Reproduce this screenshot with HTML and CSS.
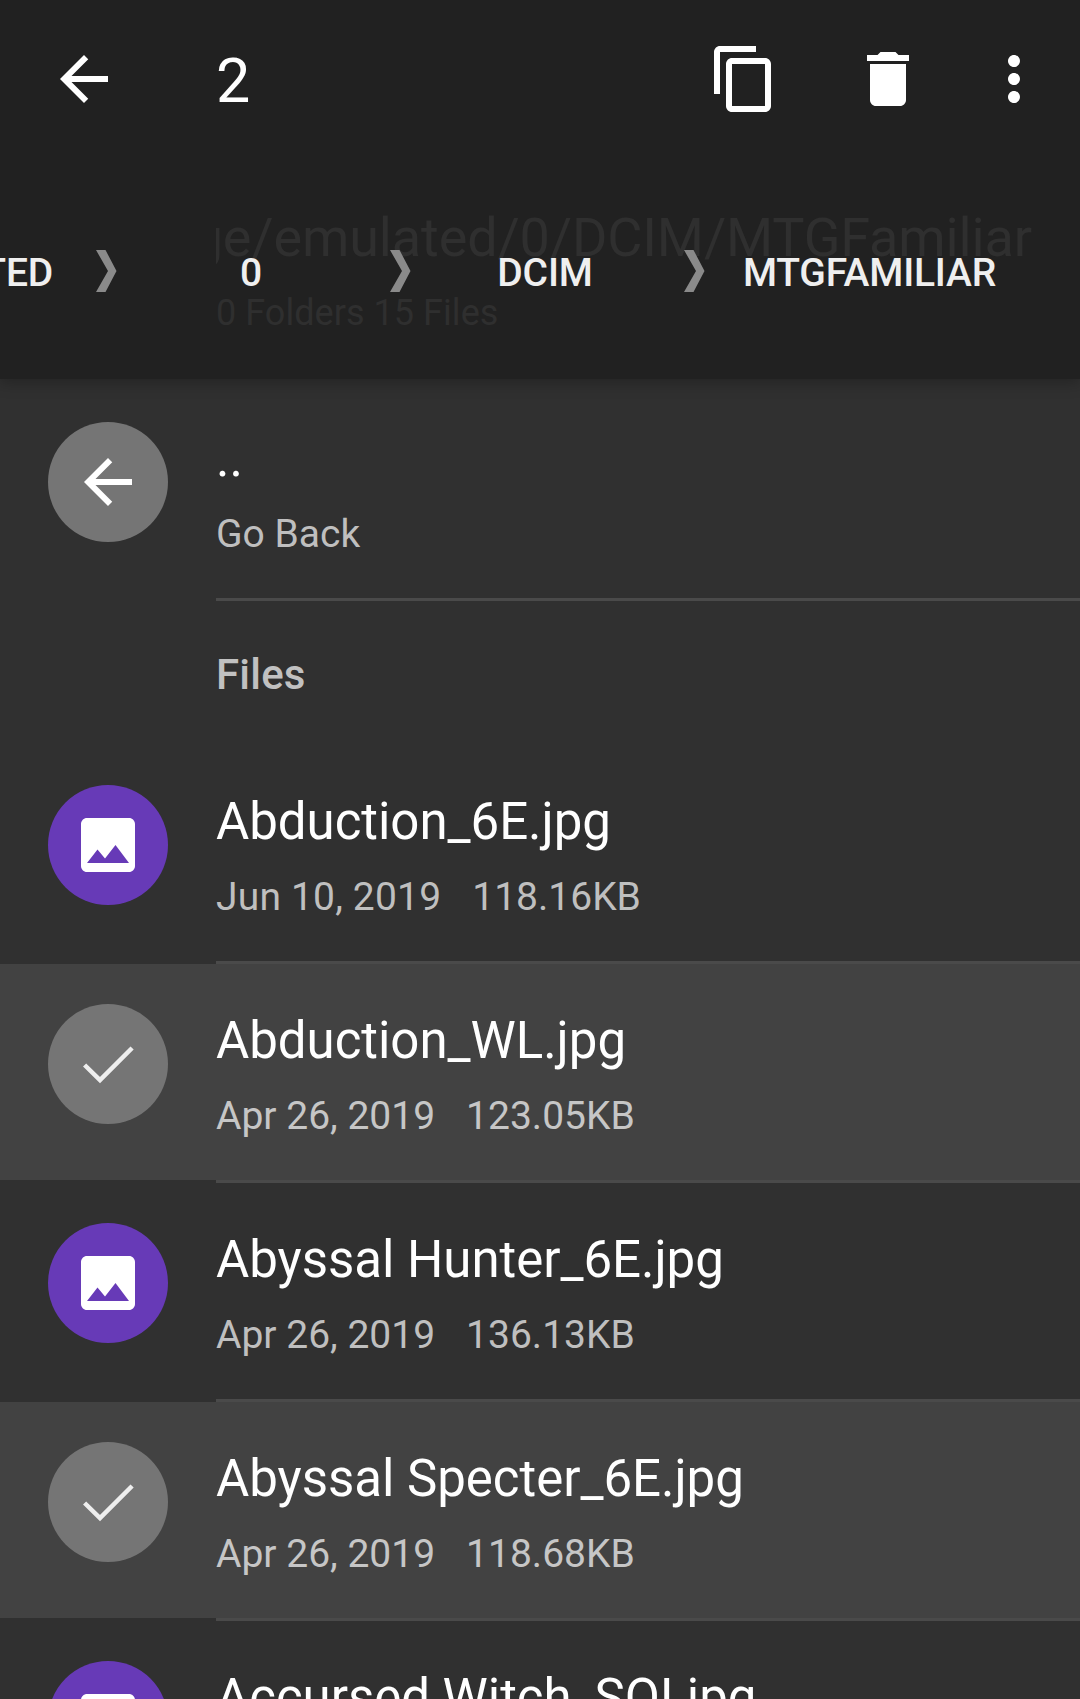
FILE: index.html
```html
<!DOCTYPE html>
<html lang="en">
<head>
<meta charset="utf-8">
<title>Files</title>
<link rel="stylesheet" href="styles.css">
</head>
<body>
<svg class="defs" aria-hidden="true">
  <symbol id="arrow" viewBox="0 0 24 24"><path d="M20 11H7.83l5.59-5.59L12 4l-8 8 8 8 1.41-1.41L7.83 13H20v-2z"/></symbol>
  <symbol id="image" viewBox="0 0 24 24"><path d="M21 19V5c0-1.100-.9-2-2-2H5c-1.100 0-2 .9-2 2v14c0 1.100.9 2 2 2h14c1.100 0 2-.9 2-2zM8.500 13.500l2.500 3.010L14.500 12l4.500 6H5l3.500-4.500z"/></symbol>
  <symbol id="check" viewBox="0 0 54 54"><path d="M3.600 28L19 43.200 51.100 11" fill="none" stroke="currentColor" stroke-width="4.500"/></symbol>
  <symbol id="chevron" viewBox="0 0 21 42"><path d="M0 0H9.500L20.500 21 9.500 42H0L12 21z"/></symbol>
</svg>
<header class="appbar">
  <div class="toolbar">
    <svg class="icon back"><use href="#arrow"/></svg>
    <h1 class="count">2</h1>
    <svg class="icon copy" viewBox="0 0 24 24"><path d="M16 1H4c-1.100 0-2 .9-2 2v14h2V3h12V1zm3 4H8c-1.100 0-2 .9-2 2v14c0 1.100.9 2 2 2h11c1.100 0 2-.9 2-2V7c0-1.100-.9-2-2-2zm0 16H8V7h11v14z"/></svg>
    <svg class="icon trash" viewBox="0 0 24 24"><path d="M6 19c0 1.100.9 2 2 2h8c1.100 0 2-.9 2-2V7H6v12zM19 4h-3.500l-1-1h-5l-1 1H5v2h14V4z"/></svg>
    <svg class="icon more" viewBox="0 0 24 24"><path d="M12 8c1.100 0 2-.9 2-2s-.9-2-2-2-2 .9-2 2 .9 2 2 2zm0 2c-1.100 0-2 .9-2 2s.9 2 2 2 2-.9 2-2-.9-2-2-2zm0 6c-1.100 0-2 .9-2 2s.9 2 2 2 2-.9 2-2-.9-2-2-2z"/></svg>
  </div>
  <div class="ghost"><div class="ghost-path"><span>/storage/emulated/0/DCIM/MTGFamiliar</span></div><div class="ghost-info">0 Folders 15 Files</div></div>
  <nav class="crumbs">
    <span class="crumb first">EMULATED</span><svg class="sep"><use href="#chevron"/></svg>
    <span class="crumb">0</span><svg class="sep"><use href="#chevron"/></svg>
    <span class="crumb">DCIM</span><svg class="sep"><use href="#chevron"/></svg>
    <span class="crumb last">MTGFAMILIAR</span>
  </nav>
</header>
<main class="list">
  <div class="row"><div class="avatar"><svg class="glyph"><use href="#arrow"/></svg></div><div class="body"><div class="name">..</div><div class="meta">Go Back</div></div></div>
  <div class="divider"></div>
  <h2 class="section">Files</h2>
  <div class="row"><div class="avatar photo"><svg class="glyph"><use href="#image"/></svg></div><div class="body"><div class="name">Abduction_6E.jpg</div><div class="meta"><span class="date unkerned">Jun 10, 2019</span><span>118.16KB</span></div></div></div>
  <div class="divider"></div>
  <div class="row selected"><div class="avatar"><svg class="tick"><use href="#check"/></svg></div><div class="body"><div class="name">Abduction_WL.jpg</div><div class="meta"><span class="date">Apr 26, 2019</span><span>123.05KB</span></div></div></div>
  <div class="divider"></div>
  <div class="row"><div class="avatar photo"><svg class="glyph"><use href="#image"/></svg></div><div class="body"><div class="name">Abyssal Hunter_6E.jpg</div><div class="meta"><span class="date">Apr 26, 2019</span><span>136.13KB</span></div></div></div>
  <div class="divider"></div>
  <div class="row selected"><div class="avatar"><svg class="tick"><use href="#check"/></svg></div><div class="body"><div class="name">Abyssal Specter_6E.jpg</div><div class="meta"><span class="date">Apr 26, 2019</span><span>118.68KB</span></div></div></div>
  <div class="divider"></div>
  <div class="row"><div class="avatar photo"><svg class="glyph"><use href="#image"/></svg></div><div class="body"><div class="name">Accursed Witch_SOI.jpg</div></div></div>
</main>
</body>
</html>
```
FILE: styles.css
```css
* { box-sizing: border-box; }
body { margin: 0; height: 1699px; overflow: hidden; background: #303030; color: #fff; font-family: Roboto, sans-serif; display: flex; flex-direction: column; }
.defs { position: absolute; width: 0; height: 0; }
svg { fill: currentColor; display: block; flex: none; }

.appbar { height: 379px; flex: none; background: #212121; position: relative; box-shadow: 0 3px 14px 1px rgba(0,0,0,.25); z-index: 1; }
.toolbar { height: 158px; display: flex; align-items: center; padding-left: 48px; }
.icon { width: 72px; height: 72px; flex: none; }
.count { margin: 4px 0 0 96px; width: 461px; font-size: 61px; line-height: 70px; font-weight: 400; }
.copy { margin-left: 31px; }
.trash { margin-left: 72px; }
.more { margin-left: 54px; }

/* Title of the screen below, fading out behind the breadcrumbs */
.ghost { position: absolute; left: 216px; top: 206px; width: 816px; color: #2f2f2f; }
.ghost-path { font-size: 54px; line-height: 64px; letter-spacing: -.13px; display: flex; justify-content: flex-end; overflow: hidden; white-space: nowrap; }
.ghost-info { font-size: 36px; line-height: 42px; margin-top: 22px; letter-spacing: .05px; }

.crumbs { position: relative; display: flex; align-items: center; height: 144px; margin: 41px 0 0 -200px; white-space: nowrap; font-size: 39px; font-weight: 500; letter-spacing: -.2px; color: #efefef; }
.crumb { flex: none; width: 268px; padding-top: 4px; text-align: center; }
.first { width: 291px; padding-right: 38px; text-align: right; }
.last { width: 329px; }
.sep { width: 21px; height: 42px; margin-left: 5px; color: #8a8a8a; }

.list { flex: 1; min-height: 0; overflow: hidden; padding-top: 3px; }
.row { height: 216px; display: flex; padding-left: 48px; }
.selected { background: #424242; }
.divider { height: 3px; margin-left: 216px; background: #4a4a4a; }
.avatar { width: 120px; height: 120px; margin-top: 40px; border-radius: 50%; background: #757575; display: flex; align-items: center; justify-content: center; flex: none; }
.photo { background: #673ab7; }
.glyph { width: 72px; height: 72px; }
.tick { width: 54px; height: 54px; color: #eee; }
.body { flex: 1; margin-left: 48px; padding-top: 45px; white-space: nowrap; }
.name { font-size: 51px; line-height: 64px; letter-spacing: -.03px; }
.meta { display: flex; gap: 31px; font-size: 39px; line-height: 48px; margin-top: 19px; color: #bfbfbf; }
.selected .meta { color: #c6c6c6; }
.unkerned { letter-spacing: .18px; }
.section { margin: 0; padding-left: 216px; height: 144px; line-height: 147px; font-size: 42px; font-weight: 500; letter-spacing: .2px; color: #c1c1c1; }
```
